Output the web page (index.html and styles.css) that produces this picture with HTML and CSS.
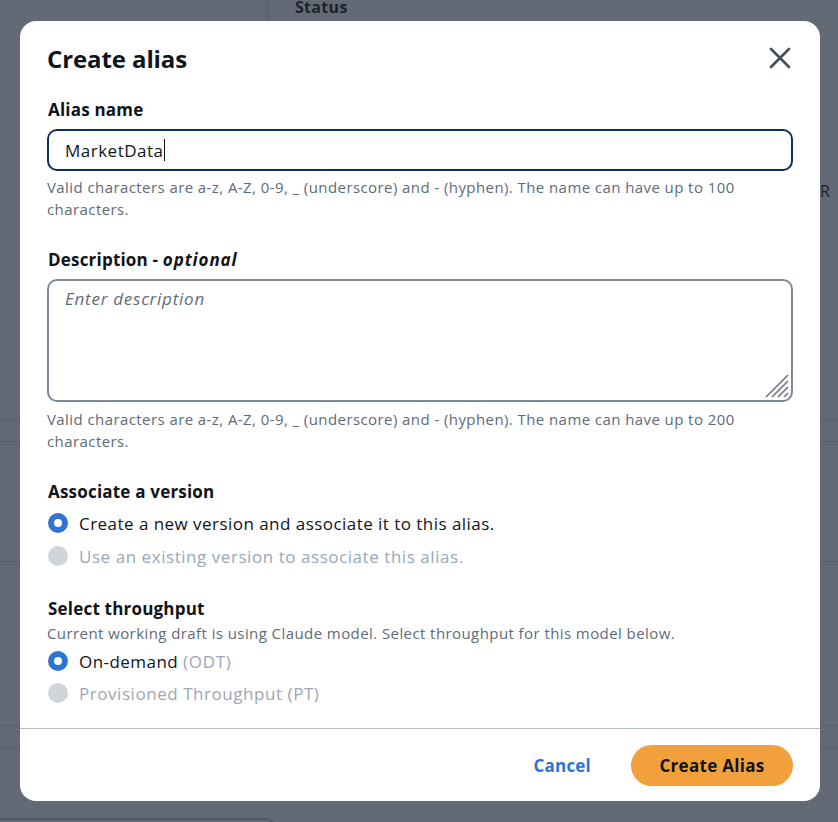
FILE: index.html
```html
<!DOCTYPE html>
<html lang="en">
<head>
<meta charset="utf-8">
<title>Create alias</title>
<link rel="stylesheet" href="styles.css">
</head>
<body>
<div class="backdrop">
  <div class="bg-row bg-row-1">
    <div class="bg-col-a"></div>
    <div class="bg-col-b"><span class="bg-head">Status</span></div>
    <div class="bg-col-c"><span class="bg-cell">R</span></div>
  </div>
  <div class="bg-row bg-row-2"></div>
  <div class="bg-row bg-row-3"></div>
  <div class="bg-row bg-row-4"></div>
  <div class="bg-row bg-row-5"></div>
  <div class="bg-panel"></div>
</div>

<div class="modal" role="dialog" aria-labelledby="modal-title">
  <div class="modal-header">
    <h2 id="modal-title" class="modal-title">Create alias</h2>
    <button class="close-btn" aria-label="Close">
      <svg width="22" height="22" viewBox="0 0 22 22" aria-hidden="true">
        <path d="M2 2 L20 20 M20 2 L2 20" stroke="#414d5c" stroke-width="2.6" stroke-linecap="round" fill="none"/>
      </svg>
    </button>
  </div>

  <div class="modal-body">
    <div class="field">
      <label class="field-label" for="alias-name">Alias name</label>
      <div class="input focused"><span class="input-text">MarketData</span><span class="caret"></span></div>
      <p class="hint">Valid characters are a-z, A-Z, 0-9, _ (underscore) and - (hyphen). The name can have up to 100 characters.</p>
    </div>

    <div class="field field-desc">
      <label class="field-label">Description - <em>optional</em></label>
      <div class="textarea">
        <span class="placeholder">Enter description</span>
        <svg class="resize" width="26" height="26" viewBox="0 0 26 26" aria-hidden="true">
          <path d="M2 24 L24 2 M8 24 L24 8 M14 24 L24 14 M20 24 L24 20" stroke="#6b7582" stroke-width="1.6" fill="none"/>
        </svg>
      </div>
      <p class="hint">Valid characters are a-z, A-Z, 0-9, _ (underscore) and - (hyphen). The name can have up to 200 characters.</p>
    </div>

    <div class="field field-group">
      <div class="group-label">Associate a version</div>
      <div class="radios">
        <div class="radio checked"><span class="dot"></span><span class="radio-text">Create a new version and associate it to this alias.</span></div>
        <div class="radio disabled"><span class="dot"></span><span class="radio-text">Use an existing version to associate this alias.</span></div>
      </div>
    </div>

    <div class="field field-group field-tp">
      <div class="group-label">Select throughput</div>
      <p class="group-desc">Current working draft is using Claude model. Select throughput for this model below.</p>
      <div class="radios radios-tp">
        <div class="radio checked"><span class="dot"></span><span class="radio-text">On-demand <span class="muted">(ODT)</span></span></div>
        <div class="radio disabled"><span class="dot"></span><span class="radio-text">Provisioned Throughput (PT)</span></div>
      </div>
    </div>
  </div>

  <div class="modal-footer">
    <button class="btn-link">Cancel</button>
    <button class="btn-primary">Create Alias</button>
  </div>
</div>
</body>
</html>
```

FILE: styles.css
```css
* { box-sizing: border-box; }

html, body {
  margin: 0;
  padding: 0;
  height: 100%;
}

body {
  background: #646a75;
  font-family: "Open Sans", "Noto Sans", Arial, sans-serif;
  color: #0f141a;
  overflow: hidden;
}

/* ---------- dimmed page behind the dialog ---------- */
.backdrop {
  width: 838px;
  height: 822px;
}
.bg-row {
  border-bottom: 1px solid #575d68;
}
.bg-row-1 {
  height: 420px;
  display: flex;
}
.bg-col-a {
  width: 268px;
  border-right: 1px solid #575d68;
  height: 30px;
}
.bg-col-b {
  width: 540px;
  padding-left: 27px;
}
.bg-head {
  display: block;
  font-weight: 700;
  font-size: 16px;
  line-height: 14px;
  letter-spacing: 0.3px;
  color: #1d222a;
  padding-top: 0;
}
.bg-col-c {
  padding-top: 180px;
  padding-left: 12px;
}
.bg-cell {
  font-size: 16px;
  color: #1d222a;
}
.bg-row-2 { height: 22px; }
.bg-row-3 { height: 120px; }
.bg-row-4 { height: 164px; }
.bg-row-5 { height: 22px; }
.bg-panel {
  margin-top: 70px;
  width: 276px;
  height: 40px;
  border: 2px solid #4f5561;
  border-top-right-radius: 10px;
  border-left: none;
}

/* ---------- modal ---------- */
.modal {
  position: absolute;
  left: 20px;
  top: 21px;
  width: 800px;
  height: 780px;
  background: #ffffff;
  border-radius: 16px;
  display: flex;
  flex-direction: column;
  overflow: hidden;
}

.modal-header {
  display: flex;
  justify-content: space-between;
  align-items: center;
  padding: 22px 29px 0 27px;
}
.modal-title {
  margin: 0;
  font-size: 24px;
  line-height: 32px;
  font-weight: 700;
  letter-spacing: -0.1px;
}
.close-btn {
  background: none;
  border: none;
  padding: 0;
  width: 22px;
  height: 22px;
  margin-top: -2px;
  display: flex;
}

.modal-body {
  padding: 0 27px;
  flex: 1;
}

.field { display: flex; flex-direction: column; }
.field:first-child { margin-top: 24px; }

.field-label {
  font-size: 17px;
  line-height: 22px;
  font-weight: 700;
  letter-spacing: 0.2px;
  margin-bottom: 8px;
  padding-left: 1px;
}
.field-label em { font-style: italic; letter-spacing: 0.9px; }

.input {
  height: 42px;
  border: 2px solid #0f2f5e;
  border-radius: 10px;
  display: flex;
  align-items: center;
  padding-left: 16px;
  font-size: 17px;
  letter-spacing: 0.5px;
}
.input-text { color: #0f141a; }
.caret {
  display: inline-block;
  width: 1px;
  height: 22px;
  background: #0f141a;
  margin-left: 0;
}

.hint {
  margin: 5px 0 0 0;
  font-size: 15px;
  line-height: 22px;
  letter-spacing: 0.42px;
  color: #5f6b7a;
  max-width: 700px;
}

.field-desc { margin-top: 29px; }

.textarea {
  position: relative;
  height: 123px;
  border: 2px solid #7d8998;
  border-radius: 10px;
  padding: 5px 16px;
}
.placeholder {
  font-size: 17px;
  line-height: 26px;
  font-style: italic;
  letter-spacing: 0.75px;
  color: #5f6b7a;
}
.resize {
  position: absolute;
  right: 1px;
  bottom: 1px;
}
.field-desc .hint { margin-top: 6px; }

.field-group { margin-top: 29px; }
.group-label {
  font-size: 17px;
  line-height: 22px;
  font-weight: 700;
  letter-spacing: 0.2px;
  padding-left: 1px;
}
.radios {
  display: flex;
  flex-direction: column;
  gap: 9px;
  margin-top: 8px;
}
.radio {
  display: flex;
  align-items: center;
  gap: 11px;
  height: 24px;
  font-size: 17px;
  letter-spacing: 0.46px;
}
.dot {
  width: 20px;
  height: 20px;
  border-radius: 50%;
  flex: none;
  margin-left: 1px;
}
.radio.checked .dot {
  background: #fff;
  border: 6px solid #2f73d5;
}
.radio.disabled .dot {
  background: #d1d5db;
}
.radio.disabled .radio-text { color: #9ba7b6; }
.radio.disabled .radio-text { letter-spacing: 0.55px; }
.muted { color: #9ba7b6; letter-spacing: 0.7px; }

.field-tp { margin-top: 30px; }
.group-desc {
  margin: 3px 0 0 0;
  font-size: 15px;
  line-height: 20px;
  letter-spacing: 0.42px;
  color: #5f6b7a;
}
.radios-tp { margin-top: 6px; gap: 8px; }

.modal-footer {
  border-top: 1px solid #b6bec9;
  display: flex;
  justify-content: flex-end;
  align-items: center;
  gap: 40px;
  padding: 16px 27px 15px 27px;
}
.btn-link {
  background: none;
  border: none;
  padding: 0;
  font-family: inherit;
  font-size: 17px;
  font-weight: 700;
  letter-spacing: 0.2px;
  color: #2f73d5;
}
.btn-primary {
  font-family: inherit;
  width: 162px;
  height: 41px;
  border: none;
  border-radius: 21px;
  background: #f2a03c;
  color: #0f141a;
  font-size: 17px;
  font-weight: 700;
  letter-spacing: 0.3px;
}
```
